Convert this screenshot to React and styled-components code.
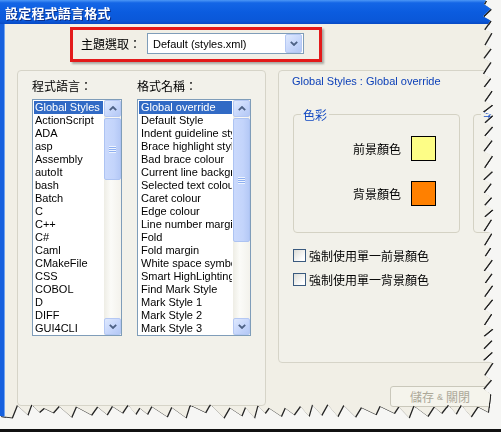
import React from "react";
import styled, { createGlobalStyle } from "styled-components";

const LANGUAGES = [
  "Global Styles",
  "ActionScript",
  "ADA",
  "asp",
  "Assembly",
  "autoIt",
  "bash",
  "Batch",
  "C",
  "C++",
  "C#",
  "Caml",
  "CMakeFile",
  "CSS",
  "COBOL",
  "D",
  "DIFF",
  "GUI4CLI",
];

const STYLES = [
  "Global override",
  "Default Style",
  "Indent guideline style",
  "Brace highlight style",
  "Bad brace colour",
  "Current line background colour",
  "Selected text colour",
  "Caret colour",
  "Edge colour",
  "Line number margin",
  "Fold",
  "Fold margin",
  "White space symbol",
  "Smart HighLighting",
  "Find Mark Style",
  "Mark Style 1",
  "Mark Style 2",
  "Mark Style 3",
];

// torn paper outline for the screenshot edge
const tornEdge = () => {
  let seed = 11;
  const rnd = () => {
    seed = (seed * 9301 + 49297) % 233280;
    return seed / 233280;
  };
  const pts = ["0px 0px", "486px 0px"];
  let y = 4;
  let out = false;
  while (y < 404) {
    const x = out ? 490 + rnd() * 2.5 : 482.5 + rnd() * 2;
    pts.push(`${x.toFixed(1)}px ${y.toFixed(1)}px`);
    y += out ? 7 + rnd() * 6 : 2 + rnd() * 3;
    out = !out;
  }
  let x = 488;
  out = false;
  while (x > 4) {
    const yy = out ? 404 + rnd() * 4 : 412 + rnd() * 6;
    pts.push(`${x.toFixed(1)}px ${yy.toFixed(1)}px`);
    x -= out ? 3 + rnd() * 4 : 7 + rnd() * 9;
    out = !out;
  }
  pts.push("0px 416px");
  return `polygon(${pts.join(", ")})`;
};

const TORN = tornEdge();

const GlobalStyle = createGlobalStyle`
  html, body {
    margin: 0;
    padding: 0;
    background: #f6f6f4;
  }
  body {
    width: 501px;
    height: 432px;
    overflow: hidden;
    font-family: "Liberation Sans", "Noto Sans CJK TC", sans-serif;
  }
`;

const Page = styled.div`
  height: 432px;
  display: flex;
  flex-direction: column;
  justify-content: space-between;
`;

const Shadow = styled.div`
  filter: drop-shadow(1px 1px 0.6px rgba(0, 0, 0, 0.85));
`;

const Window = styled.div`
  width: 498px;
  height: 422px;
  background: #f1efe6;
  clip-path: ${TORN};
  display: flex;
  flex-direction: column;
  overflow: hidden;
`;

const TitleBar = styled.div`
  height: 24px;
  flex: none;
  padding-left: 5px;
  display: flex;
  align-items: center;
  background: linear-gradient(180deg, #4c97f6 0%, #1466e6 12%, #0b5cdf 50%, #0a57d8 88%, #0849c4 100%);
  color: #fff;
  font: bold 13px "Noto Sans CJK TC", sans-serif;
  letter-spacing: 0.2px;
  text-shadow: 1px 1px 0 #0b2f8a;
`;

const Body = styled.div`
  flex: 1;
  border-left: 4px solid #1660de;
  box-shadow: inset 1px 0 0 #6fa3f0;
  padding-top: 3px;
`;

const ThemeBox = styled.div`
  margin-left: 66px;
  display: inline-flex;
  align-items: center;
  gap: 6px;
  padding: 3px 15px 5px 8px;
  border: 3px solid #e31a1a;
  box-shadow: 2px 2px 2px rgba(0, 0, 0, 0.3);
`;

const Label = styled.span`
  font: 12px/17px "Noto Sans CJK TC", sans-serif;
  color: #000;
  white-space: nowrap;
`;

const Combo = styled.div`
  width: 157px;
  height: 21px;
  box-sizing: border-box;
  border: 1px solid #7f9db9;
  background: #fff;
  display: flex;
  align-items: center;
  justify-content: space-between;
  padding: 1px;
  font-size: 11px;
  color: #000;

  span {
    padding-left: 4px;
  }
`;

const XpButton = styled.div`
  width: ${(p) => p.$w || 17}px;
  height: ${(p) => p.$h || 17}px;
  flex: none;
  box-sizing: border-box;
  border: 1px solid #b5c8f3;
  border-radius: 2px;
  background: linear-gradient(135deg, #dfe9fe 0%, #c6d6fb 55%, #b4c8f5 100%);
  display: flex;
  align-items: center;
  justify-content: center;
`;

const Chevron = ({ up }) => (
  <svg width="8" height="5" viewBox="0 0 8 5">
    <path
      d={up ? "M0.8 4.2 L4 1 L7.2 4.2" : "M0.8 0.8 L4 4 L7.2 0.8"}
      fill="none"
      stroke="#4d6185"
      strokeWidth="1.8"
    />
  </svg>
);

const Main = styled.div`
  display: flex;
  align-items: flex-start;
  margin: 8px 0 0 13px;
  gap: 12px;
`;

const Panel = styled.div`
  box-sizing: border-box;
  width: ${(p) => p.$w}px;
  height: ${(p) => p.$h}px;
  border: 1px solid #d6d4c8;
  border-radius: 4px;
  background: #f2f1ea;
  flex: none;
  overflow: hidden;
`;

const ListColumns = styled.div`
  display: flex;
  gap: 15px;
  padding: 6px 0 0 14px;
`;

const ListColumn = styled.div`
  display: flex;
  flex-direction: column;
  gap: 5px;
`;

const ListBox = styled.div`
  width: ${(p) => p.$w}px;
  height: 237px;
  box-sizing: border-box;
  border: 1px solid #7f9db9;
  background: #fff;
  display: flex;
`;

const Items = styled.div`
  flex: 1;
  min-width: 0;
  padding-top: 1px;
  overflow: hidden;
`;

const Item = styled.div`
  height: 13px;
  line-height: 13px;
  margin: 0 1px;
  padding-left: ${(p) => p.$pad}px;
  font-size: 11px;
  white-space: nowrap;
  overflow: hidden;
  color: ${(p) => (p.$selected ? "#fff" : "#000")};
  background: ${(p) => (p.$selected ? "#316ac5" : "transparent")};
`;

const ScrollBar = styled.div`
  width: 17px;
  flex: none;
  display: flex;
  flex-direction: column;
  background: linear-gradient(90deg, #eeede5, #fbfbf8 40%, #f3f2ec);
`;

const Track = styled.div`
  flex: 1;
  padding-top: 1px;
`;

const Thumb = styled.div`
  height: ${(p) => p.$h}px;
  box-sizing: border-box;
  border: 1px solid #adc3f2;
  border-radius: 2px;
  background: linear-gradient(90deg, #cad9fc, #c3d4fb 60%, #b5c9f6);
  display: flex;
  align-items: center;
  justify-content: center;

  &::after {
    content: "";
    width: 7px;
    height: 7px;
    background: repeating-linear-gradient(180deg, #eef4fe 0 1px, #8fb0f1 1px 2px);
  }
`;

const RightColumn = styled.div`
  display: flex;
  flex-direction: column;
`;

const PanelTitle = styled.div`
  padding: 4px 0 0 13px;
  font-size: 11px;
  line-height: 13px;
  color: #0b3fb8;
`;

const GroupRow = styled.div`
  display: flex;
  gap: 13px;
  margin: 18px 0 0 14px;
`;

const GroupBox = styled.fieldset`
  margin: 0;
  padding: 13px 23px 26px 0;
  width: ${(p) => p.$w}px;
  box-sizing: border-box;
  border: 1px solid #d4d2c4;
  border-radius: 4px;
  min-height: 127px;
  display: flex;
  flex-direction: column;
  gap: 20px;
  flex: none;

  legend {
    margin-left: 7px;
    padding: 0 2px;
    font: 12px/17px "Noto Sans CJK TC", sans-serif;
    color: #1249c2;
  }
`;

const ColorRow = styled.div`
  display: flex;
  justify-content: flex-end;
  align-items: center;
  gap: 10px;
`;

const Swatch = styled.div`
  width: 25px;
  height: 25px;
  box-sizing: border-box;
  border: 1px solid #000;
  background: ${(p) => p.$color};
`;

const Checks = styled.div`
  display: flex;
  flex-direction: column;
  gap: 7px;
  margin: 14px 0 0 14px;
`;

const CheckRow = styled.label`
  display: flex;
  align-items: center;
  gap: 3px;
`;

const CheckBox = styled.span`
  width: 13px;
  height: 13px;
  box-sizing: border-box;
  border: 1px solid #3a5a7e;
  background: linear-gradient(135deg, #dcdcd6, #fff 80%);
  flex: none;
`;

const SaveButton = styled.div`
  margin: 23px 0 0 112px;
  width: 104px;
  height: 21px;
  box-sizing: border-box;
  border: 1px solid #cac8bb;
  border-radius: 3px;
  background: #f5f4ec;
  color: #aca899;
  display: flex;
  align-items: center;
  padding-left: 19px;
  font: 12px "Noto Sans CJK TC", sans-serif;

  i {
    font-style: normal;
    font: 9px "Liberation Sans", sans-serif;
    padding: 0 3px;
  }
`;

const BottomLine = styled.div`
  height: 3px;
  background: #111;
`;

const StyleList = ({ items, width, pad, thumb }) => (
  <ListBox $w={width}>
    <Items>
      {items.map((name, i) => (
        <Item key={name} $selected={i === 0} $pad={pad}>
          {name}
        </Item>
      ))}
    </Items>
    <ScrollBar>
      <XpButton>
        <Chevron up />
      </XpButton>
      <Track>
        <Thumb $h={thumb} />
      </Track>
      <XpButton>
        <Chevron />
      </XpButton>
    </ScrollBar>
  </ListBox>
);

const App = () => {
  return (
    <Page>
      <GlobalStyle />
      <Shadow>
        <Window>
          <TitleBar>設定程式語言格式</TitleBar>
          <Body>
            <ThemeBox>
              <Label>主題選取：</Label>
              <Combo>
                <span>Default (styles.xml)</span>
                <XpButton $w={17} $h={19}>
                  <Chevron />
                </XpButton>
              </Combo>
            </ThemeBox>
            <Main>
              <Panel $w={249} $h={336}>
                <ListColumns>
                  <ListColumn>
                    <Label>程式語言：</Label>
                    <StyleList items={LANGUAGES} width={90} pad={1} thumb={62} />
                  </ListColumn>
                  <ListColumn>
                    <Label>格式名稱：</Label>
                    <StyleList items={STYLES} width={114} pad={2} thumb={124} />
                  </ListColumn>
                </ListColumns>
              </Panel>
              <RightColumn>
                <Panel $w={219} $h={293}>
                  <PanelTitle>Global Styles : Global override</PanelTitle>
                  <GroupRow>
                    <GroupBox $w={167}>
                      <legend>色彩</legend>
                      <ColorRow>
                        <Label>前景顏色</Label>
                        <Swatch $color="#fdfd86" />
                      </ColorRow>
                      <ColorRow>
                        <Label>背景顏色</Label>
                        <Swatch $color="#ff8000" />
                      </ColorRow>
                    </GroupBox>
                    <GroupBox $w={22}>
                      <legend>字</legend>
                    </GroupBox>
                  </GroupRow>
                  <Checks>
                    <CheckRow>
                      <CheckBox />
                      <Label>強制使用單一前景顏色</Label>
                    </CheckRow>
                    <CheckRow>
                      <CheckBox />
                      <Label>強制使用單一背景顏色</Label>
                    </CheckRow>
                  </Checks>
                </Panel>
                <SaveButton>
                  儲存<i>&amp;</i>關閉
                </SaveButton>
              </RightColumn>
            </Main>
          </Body>
        </Window>
      </Shadow>
      <BottomLine />
    </Page>
  );
};

export default App;
